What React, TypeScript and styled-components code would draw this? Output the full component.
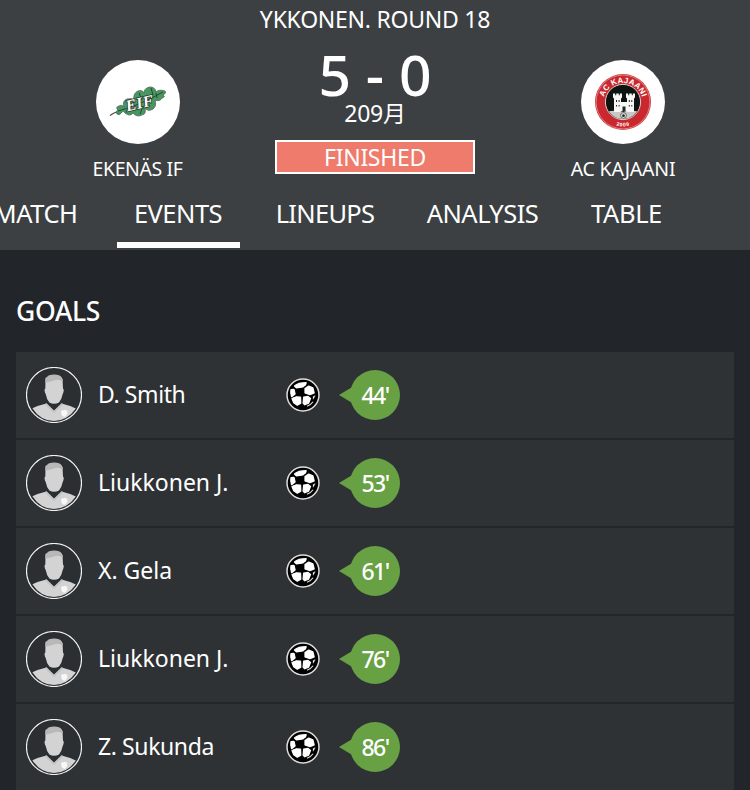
import styled, { createGlobalStyle } from "styled-components";

const GlobalStyle = createGlobalStyle`
  * {
    box-sizing: border-box;
  }
  body {
    margin: 0;
    background-color: #222529;
    color: #fff;
    font-family: "Noto Sans", "Noto Sans CJK SC", sans-serif;
    overflow: hidden;
  }
`;

const Page = styled.div`
  width: 750px;
  height: 790px;
  overflow: hidden;
`;

const Header = styled.header`
  height: 250px;
  background-color: #3c4043;
`;

const Match = styled.div`
  height: 180px;
  display: grid;
  grid-template-columns: 275px 200px 275px;
`;

const Team = styled.div<{ $away?: boolean }>`
  display: flex;
  flex-direction: column;
  align-items: center;
  padding-top: 60px;
  padding-left: ${({ $away }) => ($away ? "21px" : "0")};
  svg {
    display: block;
  }
`;

const TeamName = styled.span<{ $spacing: number }>`
  margin-top: 12px;
  font-size: 19.5px;
  line-height: 26px;
  white-space: nowrap;
  letter-spacing: ${({ $spacing }) => $spacing}px;
`;

const Center = styled.div`
  display: flex;
  flex-direction: column;
  align-items: center;
  white-space: nowrap;
`;

const Round = styled.span`
  margin-top: 3px;
  font-size: 23px;
  line-height: 32px;
  letter-spacing: -0.25px;
`;

const Score = styled.span`
  margin-top: 10px;
  font-size: 57px;
  font-weight: 500;
  line-height: 58px;
`;

const MatchDate = styled.span`
  font-size: 23px;
  line-height: 20px;
  letter-spacing: -0.3px;
`;

const Status = styled.div`
  width: 200px;
  height: 34px;
  margin-top: 17px;
  border: 2px solid #fff;
  background-color: #ee7b6c;
  font-size: 23px;
  line-height: 30px;
  letter-spacing: -0.3px;
  text-align: center;
`;

const Tabs = styled.nav`
  height: 70px;
  display: flex;
  margin-left: -45px;
`;

const Tab = styled.a<{ $width: number; $spacing: number; $active?: boolean }>`
  flex: none;
  width: ${({ $width }) => $width}px;
  height: 68px;
  padding-top: 16px;
  border-bottom: 6px solid ${({ $active }) => ($active ? "#fff" : "transparent")};
  font-size: 25.5px;
  line-height: 34px;
  letter-spacing: ${({ $spacing }) => $spacing}px;
  text-align: center;
  text-indent: -1px;
  white-space: nowrap;
`;

const Section = styled.section`
  padding: 43px 16px 0;
`;

const Title = styled.h2`
  margin: 0 0 23px;
  font-size: 26.5px;
  font-weight: 500;
  line-height: 36px;
  letter-spacing: -0.3px;
`;

const List = styled.div`
  display: flex;
  flex-direction: column;
  gap: 2px;
`;

const Row = styled.div`
  height: 86px;
  padding-left: 10px;
  display: grid;
  grid-template-columns: 72px 188px 53px 61px;
  align-items: center;
  background-color: #2e3235;
  svg {
    display: block;
  }
`;

const Player = styled.span<{ $spacing: number }>`
  padding-bottom: 2px;
  font-size: 23px;
  line-height: 32px;
  letter-spacing: ${({ $spacing }) => $spacing}px;
  white-space: nowrap;
`;

const Bubble = styled.div`
  display: flex;
  align-items: center;
`;

const Pointer = styled.div`
  width: 15px;
  height: 18px;
  margin-right: -4px;
  background-color: #67a143;
  clip-path: polygon(0 50%, 100% 0, 100% 100%);
`;

const Minute = styled.div`
  width: 50px;
  height: 50px;
  border-radius: 50%;
  background-color: #67a143;
  font-size: 23px;
  font-weight: 500;
  line-height: 51px;
  letter-spacing: -1.6px;
  text-align: center;
`;

const LeafLogo = () => (
  <svg width="84" height="84" viewBox="0 0 84 84">
    <circle cx="42" cy="42" r="42" fill="#fff" />
    <path d="M14 55.5Q17 53 22 51.5" fill="none" stroke="#4c514e" strokeWidth="1.2" />
    <path
      d="M21 54Q19 51 22 50Q19 47 23 46Q26 44 28 47Q26 41 31 39Q36 38 38 40Q37 34 41 31.5Q46 29 48 33Q48 28 54 27Q59 27 60 32Q63 29 69 31Q71 33 67 35Q70 37 66 38Q64 42 59 40Q61 46 57 49Q52 52 49 48Q50 54 47 54.5Q41 58 37 53Q34 57 29 53Q27 50 26 52Q24 56 21 54Z"
      fill="#459960"
      stroke="#5a6b60"
      strokeWidth="0.9"
    />
    <path
      d="M22 51Q42 46 67 32M43 33L46 40M55 28L57 35M44 54L47 46M61 38L60 33M30 41L35 47"
      fill="none"
      stroke="#24472f"
      strokeWidth="1"
    />
    <g transform="translate(31 51.5) rotate(-13)">
      <text
        fontFamily="Liberation Serif, serif"
        fontSize="16"
        fontWeight="700"
        fontStyle="italic"
        textLength="28"
        fill="#fff"
        stroke="#2d3a31"
        strokeWidth="1.6"
        paintOrder="stroke"
      >
        EIF
      </text>
    </g>
  </svg>
);

const CastleLogo = () => (
  <svg width="84" height="84" viewBox="0 0 84 84">
    <defs>
      <path id="crestTop" d="M22 43A20 20 0 0 1 62 43" />
      <path id="crestBottom" d="M17.5 42A24.5 24.5 0 0 0 66.5 42" />
      <clipPath id="crestInner">
        <circle cx="42" cy="42" r="17" />
      </clipPath>
    </defs>
    <circle cx="42" cy="42" r="42" fill="#fff" />
    <circle cx="42" cy="42" r="28" fill="#cf3438" />
    <circle cx="42" cy="42" r="26.9" fill="#c9292e" stroke="#ebb4b3" strokeWidth="0.6" />
    <circle cx="42" cy="42" r="17.6" fill="#0d1512" stroke="#f1dcda" strokeWidth="0.9" />
    <g clipPath="url(#crestInner)">
      <path d="M23 53Q32 49 42 52Q52 49 61 53V62H23Z" fill="#c9cac7" />
      <path
        d="M32 33.5H34.2V35.3H35.2V33.5H37.8V35.3H38.8V33.5H41V37.5L40 38.5V42H46V38.5L45 37.5V33.5H47.2V35.3H48.2V33.5H50.8V35.3H51.8V33.5H54V37.5L53 38.5V52H47Q42 50 39 52H33V38.5L32 37.5Z"
        fill="#f7f7f5"
      />
      <path
        d="M41.5 46.5H44.5V51H41.5ZM35 40H36V42H35ZM37.6 40H38.6V42H37.6ZM47.8 40H48.8V42H47.8ZM50.3 40H51.3V42H50.3ZM35 45H36V46.5H35ZM37.6 45H38.6V46.5H37.6ZM47.8 45H48.8V46.5H47.8ZM50.3 45H51.3V46.5H50.3Z"
        fill="#222725"
      />
    </g>
    <circle cx="42.5" cy="55.5" r="2.9" fill="#e3e3df" stroke="#484c49" strokeWidth="0.8" />
    <path d="M42.5 54L44 55.2L43.4 57H41.6L41 55.2Z" fill="#333" />
    <text fontFamily="Liberation Sans, sans-serif" fontSize="8" fontWeight="700" fill="#fff" textAnchor="middle" letterSpacing="0.1">
      <textPath href="#crestTop" startOffset="50%">
        AC KAJAANI
      </textPath>
    </text>
    <text fontFamily="Liberation Sans, sans-serif" fontSize="5.2" fontWeight="700" fill="#fff" textAnchor="middle" letterSpacing="0.6">
      <textPath href="#crestBottom" startOffset="50%">
        2009
      </textPath>
    </text>
  </svg>
);

const Avatar = () => (
  <svg width="56" height="56" viewBox="0 0 56 56">
    <circle cx="28" cy="28" r="27.5" fill="#2b2f32" stroke="#f2f2f2" strokeWidth="1.2" />
    <path d="M6.4 41.2Q13 38.2 20.5 36.5L28 44.5L35.6 36.5Q43 38.2 49.8 41.6Q41.5 53.8 28 54Q14.5 53.8 6.4 41.2Z" fill="#d3d3d3" />
    <path d="M20.5 36.2L28 43.6L35.6 36.2L37.6 37.3L28 46L18.6 37.3Z" fill="#c4c4c4" />
    <path
      d="M19.5 12Q28 7 36.5 12L37 21.5Q38.3 22 37.5 25L36.4 28Q35.6 32.5 33 35.4Q28 38 23.4 35.4Q20.6 32.5 20 28L18.8 25Q18 22 19.3 21.5Z"
      fill="#d3d3d3"
    />
    <path d="M19.4 15.5V11Q21.5 9.5 22.5 8.5Q28 6.5 33 8.2Q36.8 9.5 36.7 14.5Q33 11.5 28 13.5Q24 15 19.4 15.5Z" fill="#b8b8b8" />
    <path d="M35.3 43.5Q37 43.7 38.3 42.8Q39.5 43.7 41.2 43.5V47Q40.8 49 38.3 50Q35.7 49 35.3 47Z" fill="#f7f7f7" />
  </svg>
);

const Ball = () => (
  <svg width="34" height="34" viewBox="0 0 34 34">
    <circle cx="17" cy="17" r="16" fill="#000" stroke="#dedede" strokeWidth="1.5" />
    <g fill="#fff" stroke="#fff" strokeWidth="1.2" strokeLinejoin="round">
      <path d="M8.5 8Q12.5 4.6 20.2 4.7L19.6 6.8L17 8.9L10.3 9.9Z" />
      <path d="M5 11.5L8 11.4L9.1 16L5.6 18.7Q4.2 15 5 11.5Z" />
      <path d="M6 20.5L10.3 18.8L14.6 19.2L14.8 25.2L11.3 27.2L7.7 24.7Z" />
      <path d="M17.6 19.2L22 18.4L24.5 20.5L22.6 25.2L18.7 26.8L17.1 25Z" />
      <path d="M19 10.5L22.7 8.1L26.9 9.9L28.2 14.9L24 16.6L19 14.9Z" />
      <path d="M29.2 17.5L27.2 21.3L27 18.8Z" strokeWidth="0.3" />
    </g>
    <path d="M21 28.3Q25 27 27 23.8" fill="none" stroke="#ddd" strokeWidth="1.2" />
  </svg>
);

const tabs = [
  { label: "MATCH", width: 162, spacing: -0.5 },
  { label: "EVENTS", width: 123, spacing: -0.5 },
  { label: "LINEUPS", width: 171, spacing: -0.7 },
  { label: "ANALYSIS", width: 144, spacing: -0.5 },
  { label: "TABLE", width: 144, spacing: -0.4 },
];

const goals = [
  { name: "D. Smith", minute: 44, spacing: -0.4 },
  { name: "Liukkonen J.", minute: 53, spacing: 0 },
  { name: "X. Gela", minute: 61, spacing: 0 },
  { name: "Liukkonen J.", minute: 76, spacing: 0 },
  { name: "Z. Sukunda", minute: 86, spacing: -0.4 },
];

export default function App() {
  return (
    <Page>
      <GlobalStyle />
      <Header>
        <Match>
          <Team>
            <LeafLogo />
            <TeamName $spacing={-0.4}>EKENÄS IF</TeamName>
          </Team>
          <Center>
            <Round>YKKONEN. ROUND 18</Round>
            <Score>5 - 0</Score>
            <MatchDate>209月</MatchDate>
            <Status>FINISHED</Status>
          </Center>
          <Team $away>
            <CastleLogo />
            <TeamName $spacing={-0.2}>AC KAJAANI</TeamName>
          </Team>
        </Match>
        <Tabs>
          {tabs.map((tab) => (
            <Tab key={tab.label} $width={tab.width} $spacing={tab.spacing} $active={tab.label === "EVENTS"}>
              {tab.label}
            </Tab>
          ))}
        </Tabs>
      </Header>
      <Section>
        <Title>GOALS</Title>
        <List>
          {goals.map((goal) => (
            <Row key={goal.minute}>
              <Avatar />
              <Player $spacing={goal.spacing}>{goal.name}</Player>
              <Ball />
              <Bubble>
                <Pointer />
                <Minute>{goal.minute}'</Minute>
              </Bubble>
            </Row>
          ))}
        </List>
      </Section>
    </Page>
  );
}
